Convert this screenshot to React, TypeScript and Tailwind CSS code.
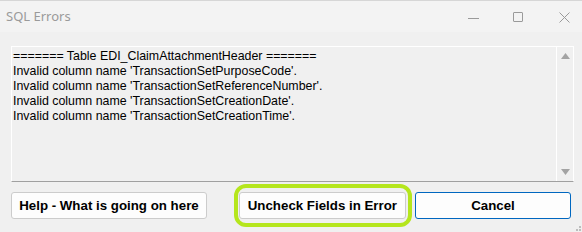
import React from "react";

const lines = [
  "======= Table EDI_ClaimAttachmentHeader =======",
  "Invalid column name 'TransactionSetPurposeCode'.",
  "Invalid column name 'TransactionSetReferenceNumber'.",
  "Invalid column name 'TransactionSetCreationDate'.",
  "Invalid column name 'TransactionSetCreationTime'.",
];

function TitleBar() {
  return (
    <div className="relative flex h-[31px] items-center bg-[#f3f3f3] pl-[6px]">
      <span className="text-[13px] text-[#9a9a9a] [font-family:'Noto_Sans',sans-serif]">SQL Errors</span>
      {/* minimize */}
      <div className="absolute left-[468px] top-[17px] h-px w-[11px] bg-[#9a9a9a]" />
      {/* maximize */}
      <div className="absolute left-[513px] top-[11px] h-[10px] w-[10px] rounded-[1px] border border-[#9a9a9a]" />
      {/* close */}
      <svg className="absolute left-[559px] top-[11px]" width="11" height="11" viewBox="0 0 11 11">
        <path d="M0.5 0.5 L10.5 10.5 M10.5 0.5 L0.5 10.5" stroke="#9a9a9a" strokeWidth="1" />
      </svg>
    </div>
  );
}

function Scrollbar() {
  return (
    <div className="flex w-[17px] flex-col items-center justify-between border-l border-white py-[6px]">
      <svg width="9" height="6" viewBox="0 0 9 6">
        <path d="M4.5 0 L9 6 L0 6 Z" fill="#a3a3a3" />
      </svg>
      <svg width="9" height="6" viewBox="0 0 9 6">
        <path d="M0 0 L9 0 L4.5 6 Z" fill="#a3a3a3" />
      </svg>
    </div>
  );
}

export default function App() {
  return (
    <div className="relative flex h-[232px] w-[582px] flex-col overflow-hidden bg-[#f0f0f0] [font-family:'Liberation_Sans',Arial,sans-serif]">
      <div className="h-px bg-[#d6d6d6]" />
      <TitleBar />
      <div className="flex flex-col px-[11px] pt-[14px]">
        <div className="flex h-[136px] w-[563px] border border-white border-b-[#a0a0a0] bg-[#f0f0f0]">
          <div className="flex-1 pl-[1px] pt-[2px] text-[12.4px] leading-[15px] text-black">
            {lines.map((l) => (
              <div key={l}>{l}</div>
            ))}
          </div>
          <Scrollbar />
        </div>

        <div className="mt-[10px] flex h-[27px] items-stretch">
          <button className="w-[197px] rounded-[3px] border border-[#cccccc] bg-[#fdfdfd] text-[13.3px] font-bold text-black">
            Help - What is going on here
          </button>
          <div className="relative ml-[32px]">
            <div className="absolute -left-[5px] -top-[8px] h-[43px] w-[178px] rounded-[12px] border-[4px] border-[#b5e61d]" />
            <button className="relative h-full w-[167px] rounded-[3px] border border-[#cccccc] bg-[#fdfdfd] text-[13.3px] font-bold text-black">
              Uncheck Fields in Error
            </button>
          </div>
          <button className="ml-[9px] w-[157px] rounded-[3px] border border-[#0067c0] bg-[#fdfdfd] text-[13.3px] font-bold text-black">
            Cancel
          </button>
        </div>
      </div>
      {/* resize grip */}
      <div className="absolute bottom-[1px] right-[1px] grid grid-cols-3 gap-[1px]">
        <span />
        <span />
        <span className="h-[2px] w-[2px] bg-[#bdbdbd]" />
        <span />
        <span className="h-[2px] w-[2px] bg-[#bdbdbd]" />
        <span className="h-[2px] w-[2px] bg-[#bdbdbd]" />
      </div>
    </div>
  );
}
